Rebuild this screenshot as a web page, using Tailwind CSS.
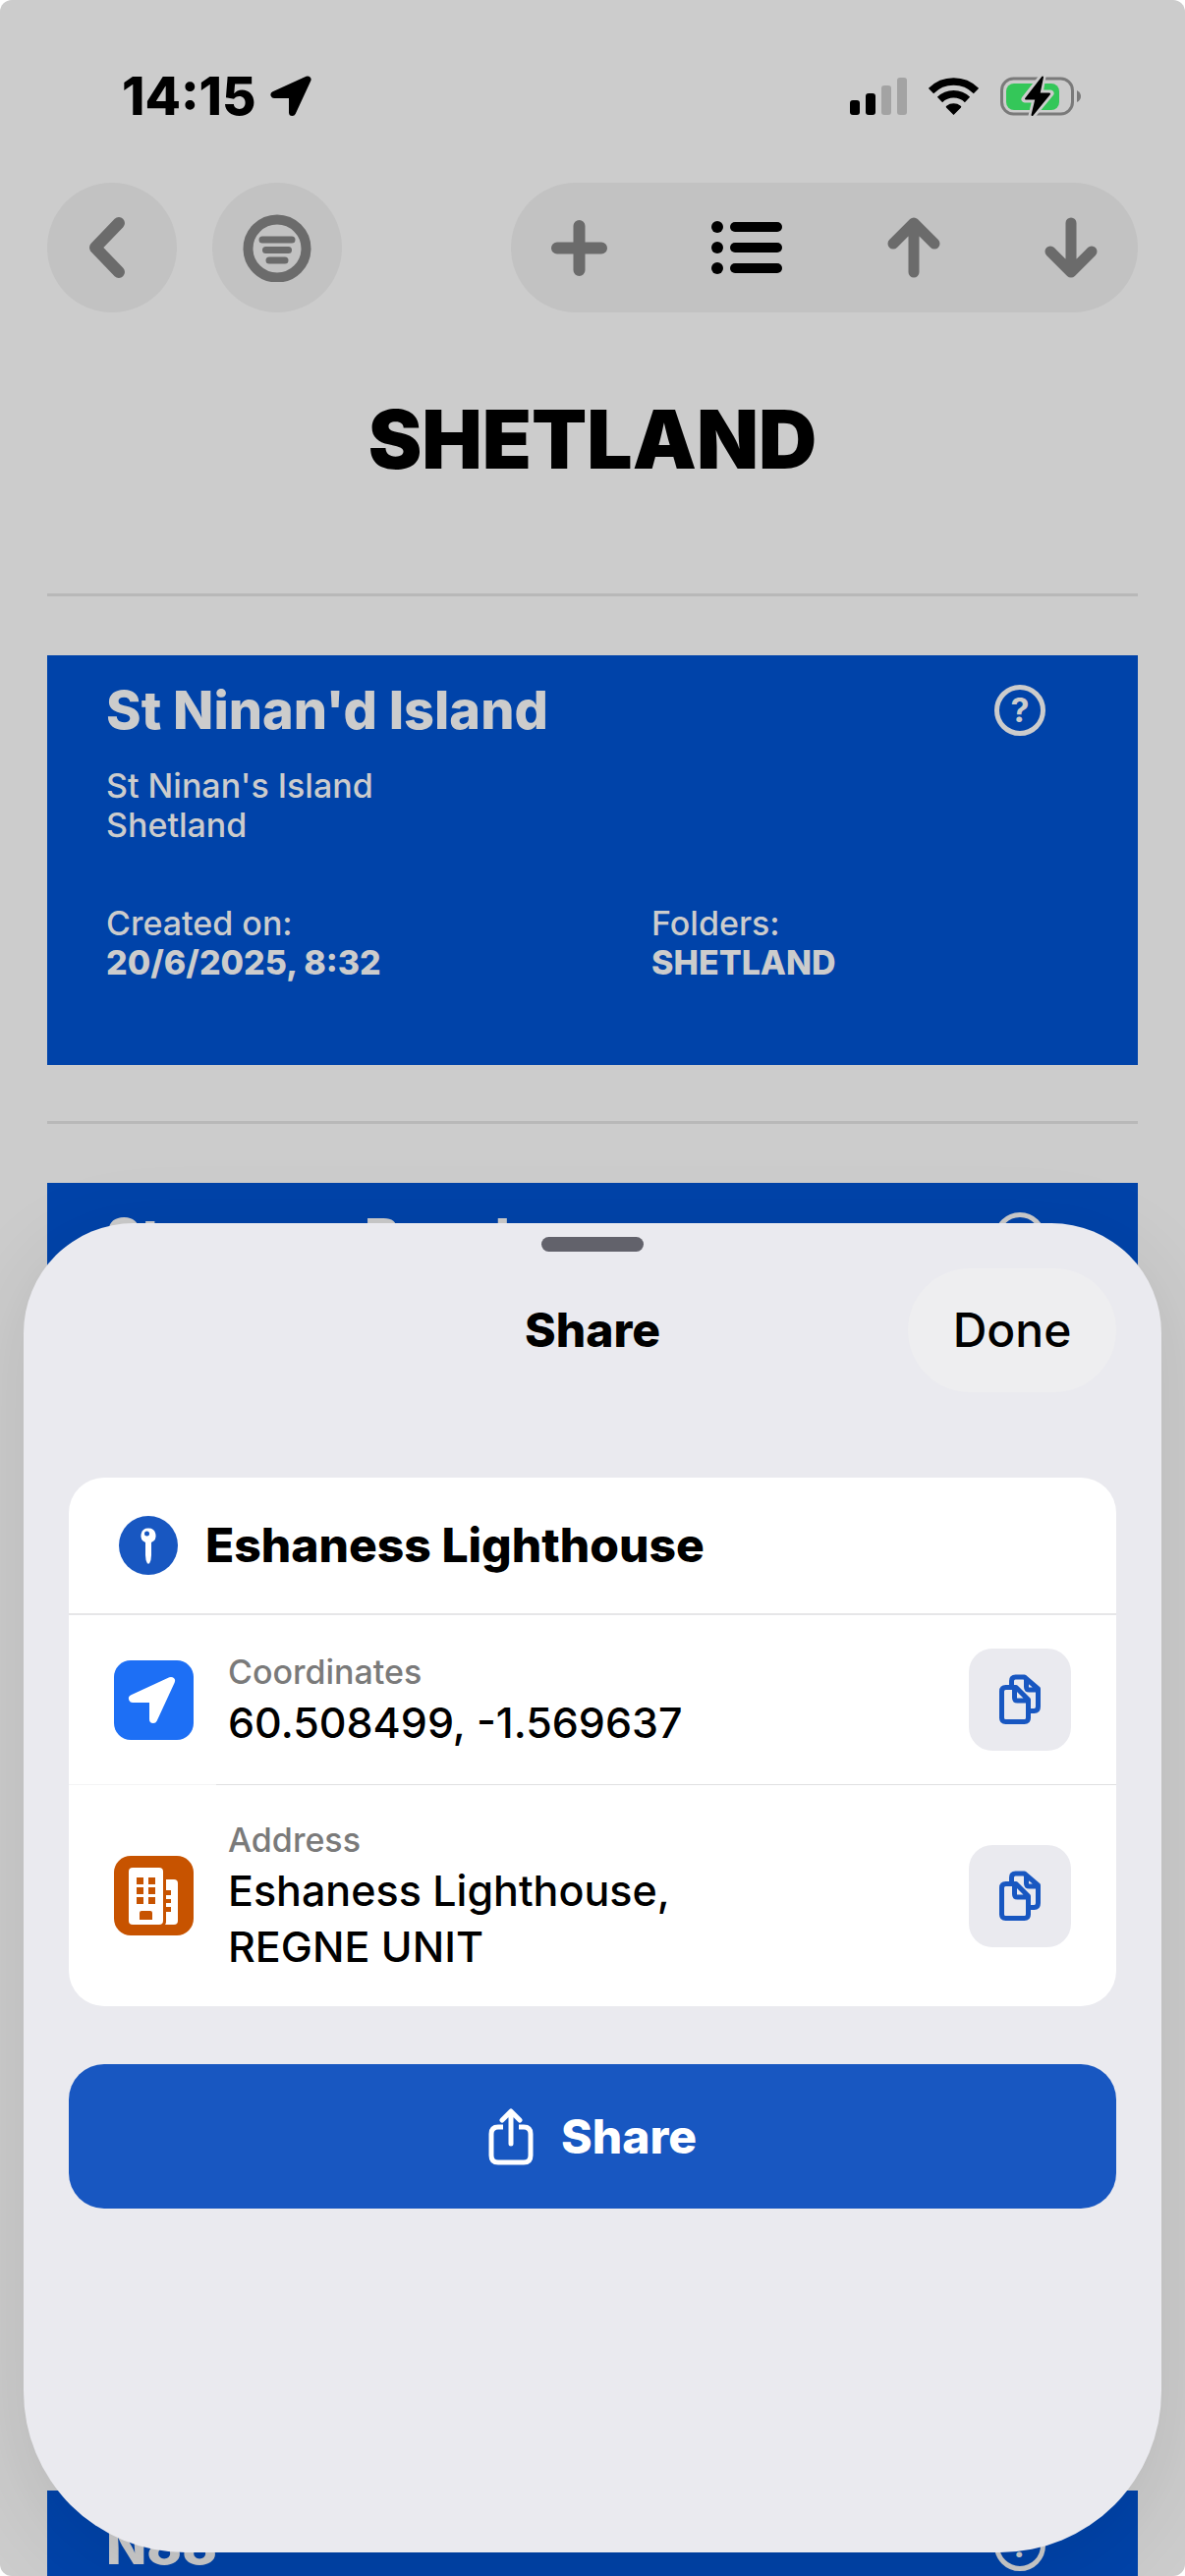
<!DOCTYPE html>
<html lang="en">
<head>
    <meta charset="UTF-8">
    <meta name="viewport" content="width=device-width, initial-scale=1.0">
    <title>Shetland</title>
    <script src="https://cdn.jsdelivr.net/npm/@tailwindcss/browser@4"></script>
    <style>
        body { font-family: Inter, "Liberation Sans", sans-serif; }
    </style>
</head>
<body class="bg-white text-black">
<div class="relative h-screen overflow-hidden rounded-xl bg-[#ccc]">

    <!-- Status bar -->
    <div class="flex items-center justify-between pt-[66px] pl-[124px] pr-[106px] h-[130px]">
        <div class="flex items-center gap-[14px]">
            <span class="text-[53px] leading-[64px] font-extrabold">14:15</span>
            <svg class="w-[42px] h-[42px]" viewBox="0 0 42 42"><path d="M38 4 4 19.500h18.500V37.500z" stroke="#000" stroke-width="7" stroke-linejoin="round"/></svg>
        </div>
        <div class="flex items-center gap-[22px]">
            <svg class="w-[58px] h-[38px]" viewBox="0 0 58 38">
                <rect x="0" y="23" width="10" height="15" rx="3"/>
                <rect x="16" y="16" width="10" height="22" rx="3"/>
                <rect x="32" y="8" width="10" height="30" rx="3" fill="#a3a3a3"/>
                <rect x="48" y="0" width="10" height="38" rx="3" fill="#a3a3a3"/>
            </svg>
            <svg class="w-[51px] h-[38px]" viewBox="0 0 51 38">
                <path d="M2.500 13.500a32.500 32.500 0 0 1 46 0M11.500 22.500a20 20 0 0 1 28 0" fill="none" stroke="#000" stroke-width="7.500"/>
                <path d="M25.500 38 18 30.500q-.8-1 .3-1.800a12 12 0 0 1 14.400 0q1.100.8.3 1.800z"/>
            </svg>
            <svg class="w-[82px] h-[42px]" viewBox="0 0 82 42">
                <rect x="1.500" y="3" width="72" height="36" rx="12" fill="none" stroke="#7a7a7a" stroke-width="3"/>
                <rect x="6" y="8" width="54" height="27" rx="8" fill="#34c759"/>
                <path d="M78 15q4 2 4 6t-4 6z" fill="#7a7a7a"/>
                <path d="M43 1 25 24h11L32 41l19-23H40z" fill="#ccc" stroke="#ccc" stroke-width="7" stroke-linejoin="round"/>
                <path d="M43 1.500 26 23.500h10.500L32.500 40 50 18.500H39.500z" stroke="#000" stroke-width="2" stroke-linejoin="round"/>
            </svg>
        </div>
    </div>

    <!-- Toolbar -->
    <nav class="mt-14 px-12 flex items-center justify-between text-[#6b6b6b]">
        <div class="flex gap-9">
            <button aria-label="Back" class="size-[132px] rounded-full bg-[#c2c2c2] flex items-center justify-center">
                <svg class="w-[60px] h-[62px]" viewBox="0 0 60 62"><path d="M37 6 13 31l24 25" fill="none" stroke="currentColor" stroke-width="12" stroke-linecap="round" stroke-linejoin="round"/></svg>
            </button>
            <button aria-label="Filter" class="size-[132px] rounded-full bg-[#c2c2c2] flex items-center justify-center">
                <svg class="size-[70px]" viewBox="0 0 70 70" fill="none" stroke="currentColor" stroke-linecap="round">
                    <circle cx="35" cy="36" r="29.500" stroke-width="10"/>
                    <path d="M20 27h30M23.500 37.500h23M27 48h16" stroke-width="7"/>
                </svg>
            </button>
        </div>
        <div class="h-[132px] w-[638px] rounded-full bg-[#c2c2c2] flex items-center justify-between px-[41px]">
            <button aria-label="Add"><svg class="w-[57px] h-[62px]" viewBox="0 0 57 62"><path d="M28.500 9v45M6 31.500h45" stroke="currentColor" stroke-width="12" stroke-linecap="round"/></svg></button>
            <button aria-label="List" class="text-black">
                <svg class="w-[72px] h-[62px]" viewBox="0 0 72 62" fill="currentColor">
                    <circle cx="6" cy="10" r="6"/><circle cx="6" cy="31" r="6"/><circle cx="6" cy="52" r="6"/>
                    <rect x="19" y="5" width="53" height="10" rx="5"/><rect x="19" y="26" width="53" height="10" rx="5"/><rect x="19" y="47" width="53" height="10" rx="5"/>
                </svg>
            </button>
            <button aria-label="Move up"><svg class="w-[54px] h-[62px]" viewBox="0 0 54 62"><path d="M27 56V7M6 27 27 6l21 21" fill="none" stroke="currentColor" stroke-width="11" stroke-linecap="round" stroke-linejoin="round"/></svg></button>
            <button aria-label="Move down"><svg class="w-[54px] h-[62px]" viewBox="0 0 54 62"><path d="M27 6v49M6 35l21 21 21-21" fill="none" stroke="currentColor" stroke-width="11" stroke-linecap="round" stroke-linejoin="round"/></svg></button>
        </div>
    </nav>

    <h1 class="mt-[82px] text-center text-[82px] leading-24 font-black">SHETLAND</h1>

    <!-- Places -->
    <main class="mt-27 px-12 text-[#ccc]">
        <hr class="border-0 h-[3px] bg-[#b8b8b8]">
        <article class="mt-15 pt-6 pb-21 px-15 bg-[#0043a9]">
            <div class="flex items-center justify-between pr-[34px]">
                <h2 class="text-[54px] leading-16 font-extrabold">St Ninan'd Island</h2>
                <button aria-label="Help">
                    <svg class="size-[52px]" viewBox="0 0 52 52"><circle cx="26" cy="26" r="23.500" fill="none" stroke="currentColor" stroke-width="5"/><text x="26" y="38" text-anchor="middle" font-size="34" font-weight="700" fill="currentColor">?</text></svg>
                </button>
            </div>
            <p class="mt-[25px] text-[34px] leading-10 font-medium">St Ninan's Island<br>Shetland</p>
            <div class="mt-15 grid grid-cols-2 text-[34px] leading-10 font-medium">
                <p>Created on:<br><b class="font-extrabold">20/6/2025, 8:32</b></p>
                <p class="pl-[60px]">Folders:<br><b class="font-extrabold">SHETLAND</b></p>
            </div>
        </article>

        <hr class="mt-[57px] border-0 h-[3px] bg-[#b8b8b8]">
        <article class="mt-15 pt-6 pb-21 px-15 min-h-[1211px] bg-[#0043a9]">
            <div class="flex items-center justify-between pr-[34px]">
                <h2 class="text-[54px] leading-16 font-extrabold">Stenness Beach</h2>
                <button aria-label="Help">
                    <svg class="size-[52px]" viewBox="0 0 52 52"><circle cx="26" cy="26" r="23.500" fill="none" stroke="currentColor" stroke-width="5"/><text x="26" y="38" text-anchor="middle" font-size="34" font-weight="700" fill="currentColor">?</text></svg>
                </button>
            </div>
        </article>

        <hr class="mt-[57px] border-0 h-[3px] bg-[#b8b8b8]">
        <article class="mt-15 pt-6 pb-21 px-15 bg-[#0043a9]">
            <div class="flex items-center justify-between pr-[34px]">
                <h2 class="text-[54px] leading-16 font-extrabold">N88</h2>
                <button aria-label="Help">
                    <svg class="size-[52px]" viewBox="0 0 52 52"><circle cx="26" cy="26" r="23.500" fill="none" stroke="currentColor" stroke-width="5"/><text x="26" y="38" text-anchor="middle" font-size="34" font-weight="700" fill="currentColor">?</text></svg>
                </button>
            </div>
        </article>
    </main>

    <!-- Share sheet -->
    <section role="dialog" aria-labelledby="sheetTitle" class="absolute inset-x-6 bottom-6 px-[46px] pt-[14px] pb-[350px] bg-[#eaeaef] rounded-t-[112px] rounded-b-[164px] shadow-[0_20px_90px_rgba(0,0,0,0.10)]">
        <div class="mx-auto w-[104px] h-[15px] rounded-full bg-[#62626b]"></div>
        <header class="mt-[17px] grid grid-cols-3 items-center">
            <h2 id="sheetTitle" class="col-start-2 text-center text-[48px] leading-16 font-extrabold">Share</h2>
            <button class="justify-self-end w-[212px] h-[126px] rounded-full bg-[#eeeef0] text-[48px] leading-16 font-medium">Done</button>
        </header>

        <div class="mt-[87px] rounded-[36px] bg-white overflow-hidden">
            <div class="h-[138px] flex items-center gap-7 pl-[51px]">
                <svg class="size-[60px]" viewBox="0 0 60 60">
                    <circle cx="30" cy="30" r="30" fill="#1857c1"/>
                    <path d="M30 12.500a7.500 7.500 0 0 1 3 14.400V40q0 5-2 8.500h-2q-2-3.500-2-8.500V26.900a7.500 7.500 0 0 1 3-14.400z" fill="#fff"/>
                    <circle cx="28.500" cy="18" r="2.500" fill="#1857c1"/>
                </svg>
                <h3 class="text-[48px] leading-16 font-extrabold">Eshaness Lighthouse</h3>
            </div>
            <div class="h-[2px] bg-[#e6e6e8]"></div>

            <div class="flex items-center py-[34px] px-[46px]">
                <svg class="size-[81px]" viewBox="0 0 81 81">
                    <rect width="81" height="81" rx="17" fill="#1d6ff5"/>
                    <path d="M58 21 19 39h21V60z" fill="#fff" stroke="#fff" stroke-width="8" stroke-linejoin="round"/>
                </svg>
                <div class="ml-[35px] flex-1">
                    <p class="text-[34px] leading-[47px] font-medium text-[#7a7a7a]">Coordinates</p>
                    <p class="text-[43px] leading-[57px] font-medium">60.508499, -1.569637</p>
                </div>
                <button aria-label="Copy coordinates" class="size-[104px] rounded-[24px] bg-[#eaeaef] flex items-center justify-center text-[#1857c1]">
                    <svg class="w-[44px] h-[52px]" viewBox="0 0 44 52" fill="none" stroke="currentColor" stroke-width="5" stroke-linejoin="round">
                        <path d="M13.500 12V7q0-4 4-4h9L40.500 15v18q0 4.500-4 4.500H32M28.500 4v9q0 3 3 3h9"/>
                        <path d="M7.500 13.500H18L30.500 26v18.500q0 4-4 4h-19q-4 0-4-4v-27q0-4 4-4zM16.500 14v10q0 3 3 3h11"/>
                    </svg>
                </button>
            </div>
            <div class="flex h-px"><div class="w-[150px] bg-[#f4f4f5]"></div><div class="flex-1 bg-[#e0e0e1]"></div></div>

            <div class="flex items-center py-8 px-[46px]">
                <svg class="size-[81px]" viewBox="0 0 81 81">
                    <rect width="81" height="81" rx="17" fill="#c75300"/>
                    <rect x="15" y="12" width="35" height="58" rx="4" fill="#fff"/>
                    <path d="M53 24h8q4 0 4 4v38q0 4-4 4h-9q1-1 1-3V57h5v-5h-5v-4h5v-4h-5v-4h5v-5h-5z" fill="#fff"/>
                    <path d="M23 22h7v7h-7zM35 22h7v7h-7zM23 32h7v7h-7zM35 32h7v7h-7zM23 42h7v7h-7zM35 42h7v7h-7zM28 56h9q2 0 2 2v7H26v-7q0-2 2-2z" fill="#c75300"/>
                </svg>
                <div class="ml-[35px] flex-1">
                    <p class="text-[34px] leading-[47px] font-medium text-[#7a7a7a]">Address</p>
                    <p class="text-[43px] leading-[57px] font-medium">Eshaness Lighthouse,<br>REGNE UNIT</p>
                </div>
                <button aria-label="Copy address" class="size-[104px] rounded-[24px] bg-[#eaeaef] flex items-center justify-center text-[#1857c1]">
                    <svg class="w-[44px] h-[52px]" viewBox="0 0 44 52" fill="none" stroke="currentColor" stroke-width="5" stroke-linejoin="round">
                        <path d="M13.500 12V7q0-4 4-4h9L40.500 15v18q0 4.500-4 4.500H32M28.500 4v9q0 3 3 3h9"/>
                        <path d="M7.500 13.500H18L30.500 26v18.500q0 4-4 4h-19q-4 0-4-4v-27q0-4 4-4zM16.500 14v10q0 3 3 3h11"/>
                    </svg>
                </button>
            </div>
        </div>

        <button class="mt-[59px] w-full h-[147px] rounded-[36px] bg-[#1857c1] text-white flex items-center justify-center gap-7 text-[48px] leading-16 font-extrabold">
            <svg class="w-[46px] h-[58px]" viewBox="0 0 46 58" fill="none" stroke="currentColor" stroke-width="5" stroke-linecap="round" stroke-linejoin="round">
                <path d="M15 19h-5q-7 0-7 7v22q0 7 7 7h26q7 0 7-7V26q0-7-7-7h-5" stroke-linecap="butt"/>
                <path d="M23 36V4M14 12l9-9 9 9"/>
            </svg>
            Share
        </button>
    </section>
</div>
</body>
</html>
